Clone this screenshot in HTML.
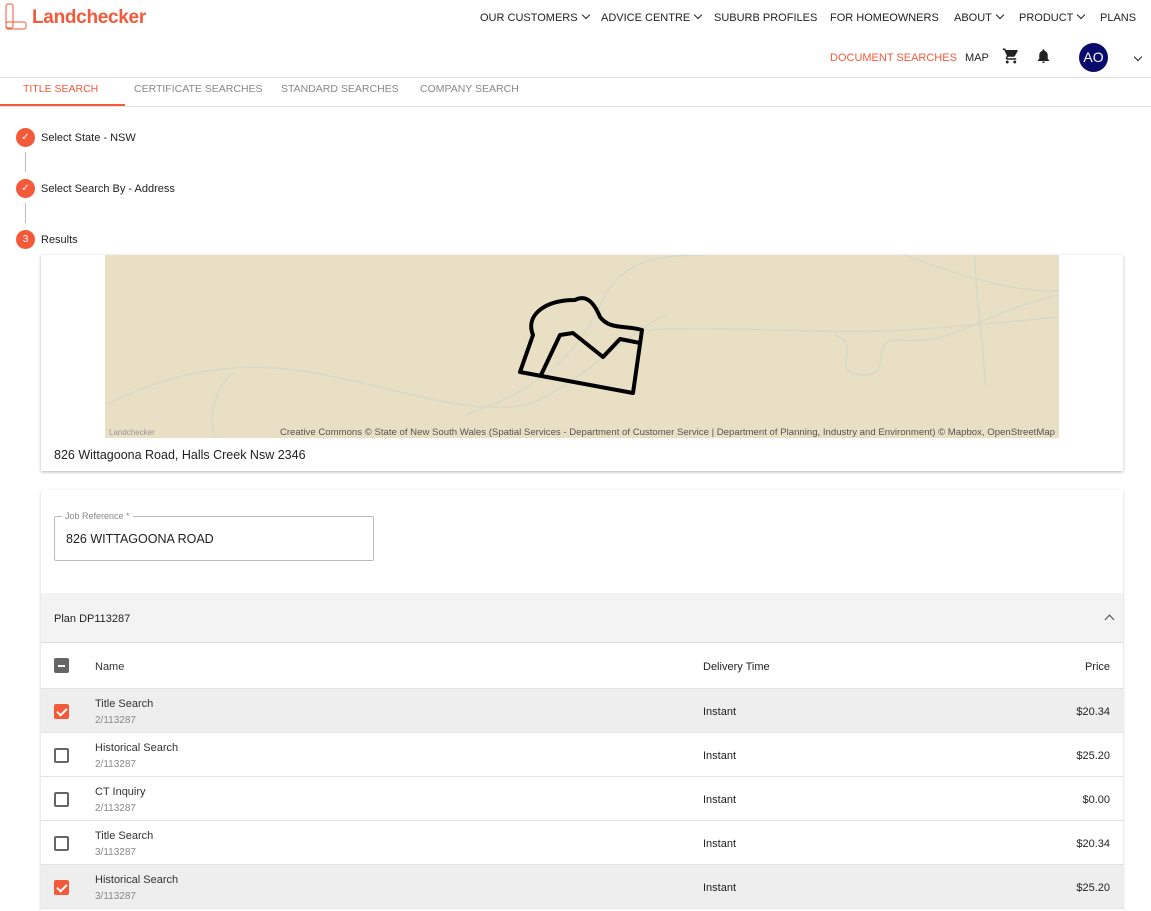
<!DOCTYPE html>
<html><head><meta charset="utf-8"><style>
*{box-sizing:border-box;margin:0;padding:0}
body{width:1151px;height:911px;overflow:hidden;background:#fff;font-family:"Liberation Sans",sans-serif;color:#222;position:relative}
.a{position:absolute;white-space:nowrap}
.nav{font-size:11px;color:#222;top:12px}
.chev{display:inline-block;width:6px;height:6px;border-right:1.5px solid #222;border-bottom:1.5px solid #222;transform:rotate(45deg);margin-left:5px;position:relative;top:-3px}
.tab{top:83px;font-size:10.5px;color:#888}
.step{width:19px;height:19px;border-radius:50%;background:#f4593a;left:16px;color:#fff;font-size:10px;text-align:center;line-height:19px}
.sl{font-size:11px;left:41px;color:#222}
.row{position:absolute;left:41px;width:1082px;height:44px;border-bottom:1px solid #e3e3e3;font-size:11px}
.row.sel{background:#eeeeee}
.cb{position:absolute;left:13px;top:15px;width:15px;height:15px;border:2px solid #666;border-radius:2px}
.cb.on{background:#f4593a;border-color:#f4593a}
.cb.on:after{content:"";position:absolute;left:3px;top:0px;width:4px;height:8px;border-right:2px solid #fff;border-bottom:2px solid #fff;transform:rotate(45deg)}
.nm{position:absolute;left:54px;top:9px;color:#333}
.sub{position:absolute;left:54px;top:26px;color:#888;font-size:10px}
.dt{position:absolute;left:662px;top:17px}
.pr{position:absolute;right:13px;top:17px}
</style></head><body>
<svg class="a" style="left:5px;top:3px" width="24" height="28"><rect x="1" y="1" width="7" height="24" rx="2" fill="none" stroke="#f4593a" stroke-width="1"/><rect x="1" y="19" width="20" height="7" rx="2" fill="none" stroke="#f4593a" stroke-width="1"/></svg>
<div class="a" style="left:32px;top:7px;font-size:19px;font-weight:bold;color:#f4593a;letter-spacing:-0.3px">Landchecker</div>
<div class="a nav" style="left:480px">OUR CUSTOMERS<span class="chev"></span></div>
<div class="a nav" style="left:601px">ADVICE CENTRE<span class="chev"></span></div>
<div class="a nav" style="left:714px">SUBURB PROFILES</div>
<div class="a nav" style="left:830px">FOR HOMEOWNERS</div>
<div class="a nav" style="left:954px">ABOUT<span class="chev"></span></div>
<div class="a nav" style="left:1019px">PRODUCT<span class="chev"></span></div>
<div class="a nav" style="left:1100px">PLANS</div>
<div class="a" style="left:830px;top:52px;font-size:11px;color:#f4593a">DOCUMENT SEARCHES</div>
<div class="a" style="left:965px;top:52px;font-size:11px">MAP</div>
<svg class="a" style="left:1002px;top:47px" width="18" height="18" viewBox="0 0 24 24"><path fill="#222" d="M7 18c-1.1 0-2 .9-2 2s.9 2 2 2 2-.9 2-2-.9-2-2-2zM1 2v2h2l3.6 7.6-1.4 2.4c-.1.3-.2.6-.2 1 0 1.1.9 2 2 2h12v-2H7.4c-.1 0-.3-.1-.3-.3v-.1l.9-1.6h7.5c.8 0 1.4-.4 1.700-1l3.6-6.5c.1-.2.2-.3.2-.5 0-.6-.4-1-1-1H5.2l-.9-2H1zm16 16c-1.1 0-2 .9-2 2s.9 2 2 2 2-.9 2-2-.9-2-2-2z"/></svg>
<svg class="a" style="left:1035px;top:47px" width="17" height="18" viewBox="0 0 24 24"><path fill="#222" d="M12 22c1.1 0 2-.9 2-2h-4c0 1.1.9 2 2 2zm6-6v-5c0-3.1-1.6-5.6-4.5-6.3V4c0-.8-.7-1.5-1.5-1.5s-1.5.7-1.5 1.5v.7C7.6 5.4 6 7.9 6 11v5l-2 2v1h16v-1l-2-2z"/></svg>
<div class="a" style="left:1079px;top:43px;width:29px;height:29px;border-radius:50%;background:#0b0b6e;color:#fff;font-size:14px;text-align:center;line-height:29px">AO</div>
<div class="a" style="left:1130px;top:50px"><span class="chev" style="border-color:#222"></span></div>
<div class="a" style="left:0;top:77px;width:1151px;height:1px;background:#e0e0e0"></div>
<div class="a" style="left:0;top:106px;width:1151px;height:1px;background:#e0e0e0"></div>
<div class="a" style="left:0;top:104px;width:125px;height:2px;background:#f4593a"></div>
<div class="a tab" style="left:23px;color:#f4593a">TITLE SEARCH</div>
<div class="a tab" style="left:134px">CERTIFICATE SEARCHES</div>
<div class="a tab" style="left:281px">STANDARD SEARCHES</div>
<div class="a tab" style="left:420px">COMPANY SEARCH</div>
<div class="a step" style="top:128px">✓</div><div class="a sl" style="top:132px">Select State - NSW</div>
<div class="a" style="left:25px;top:152px;width:1px;height:20px;background:#bbb"></div>
<div class="a step" style="top:179px">✓</div><div class="a sl" style="top:183px">Select Search By - Address</div>
<div class="a" style="left:25px;top:203px;width:1px;height:20px;background:#bbb"></div>
<div class="a step" style="top:230px">3</div><div class="a sl" style="top:234px">Results</div>
<div class="a" style="left:41px;top:255px;width:1082px;height:216px;background:#fff;box-shadow:0 1px 3px rgba(0,0,0,.3)"></div>
<svg class="a" style="left:105px;top:255px" width="954" height="183" viewBox="0 0 954 183">
<rect width="954" height="183" fill="#e8dfc4"/>
<g fill="none" stroke="#d3d9c8" stroke-width="1.2">
<path d="M0 150 C80 110 150 105 220 120 C300 135 360 160 420 150 C460 140 520 80 560 60"/>
<path d="M540 75 C620 70 720 80 800 75 C880 70 920 65 954 62"/>
<path d="M360 160 C420 140 470 110 500 40 C520 10 540 0 600 0"/>
<path d="M110 183 C100 150 120 120 130 118"/>
<path d="M730 80 C760 90 720 120 760 120 C790 120 760 80 800 85 C850 90 870 60 954 40"/>
<path d="M870 0 C870 40 880 100 880 130"/>
<path d="M800 0 C850 20 920 40 954 35"/>
</g>
<g fill="none" stroke="#000" stroke-width="4" stroke-linejoin="round">
<path d="M415 117 L428 80 C420 60 440 45 470 45 C480 40 488 45 495 62 C505 75 520 70 537 75 L528 138 Z"/>
<path d="M436 120 L455 80 L468 78 L498 102 L515 84 L535 88"/>
</g>
<text x="4" y="180" font-size="8" fill="#999" font-family="Liberation Sans">Landchecker</text>
<text x="950" y="180" font-size="9.6" fill="#555" text-anchor="end" font-family="Liberation Sans">Creative Commons © State of New South Wales (Spatial Services - Department of Customer Service | Department of Planning, Industry and Environment) © Mapbox, OpenStreetMap</text>
</svg>
<div class="a" style="left:54px;top:448px;font-size:12.5px">826 Wittagoona Road, Halls Creek Nsw 2346</div>
<div class="a" style="left:41px;top:490px;width:1082px;height:421px;background:#fff;box-shadow:0 1px 3px rgba(0,0,0,.2)"></div>
<div class="a" style="left:54px;top:516px;width:320px;height:45px;border:1px solid #bbb;border-radius:2px"></div>
<div class="a" style="left:62px;top:511px;font-size:9px;color:#888;background:#fff;padding:0 3px">Job Reference *</div>
<div class="a" style="left:66px;top:532px;font-size:12.5px">826 WITTAGOONA ROAD</div>
<div class="a" style="left:41px;top:593px;width:1082px;height:50px;background:#f3f3f3;border-bottom:1px solid #ddd"></div>
<div class="a" style="left:54px;top:613px;font-size:11px">Plan DP113287</div>
<div class="a" style="left:1106px;top:616px;width:7px;height:7px;border-left:1.5px solid #444;border-top:1.5px solid #444;transform:rotate(45deg)"></div>
<div class="row" style="top:644px;height:45px">
<div class="cb" style="background:#666;top:14px"><div style="position:absolute;left:2px;top:4.5px;width:7px;height:2px;background:#fff"></div></div>
<div class="nm" style="left:54px;top:17px">Name</div><div class="dt">Delivery Time</div><div class="pr">Price</div></div>
<div class="row sel" style="top:689px"><div class="cb on"></div><div class="nm">Title Search</div><div class="sub">2/113287</div><div class="dt">Instant</div><div class="pr">$20.34</div></div>
<div class="row" style="top:733px"><div class="cb"></div><div class="nm">Historical Search</div><div class="sub">2/113287</div><div class="dt">Instant</div><div class="pr">$25.20</div></div>
<div class="row" style="top:777px"><div class="cb"></div><div class="nm">CT Inquiry</div><div class="sub">2/113287</div><div class="dt">Instant</div><div class="pr">$0.00</div></div>
<div class="row" style="top:821px"><div class="cb"></div><div class="nm">Title Search</div><div class="sub">3/113287</div><div class="dt">Instant</div><div class="pr">$20.34</div></div>
<div class="row sel" style="top:865px"><div class="cb on"></div><div class="nm">Historical Search</div><div class="sub">3/113287</div><div class="dt">Instant</div><div class="pr">$25.20</div></div>
</body></html>
